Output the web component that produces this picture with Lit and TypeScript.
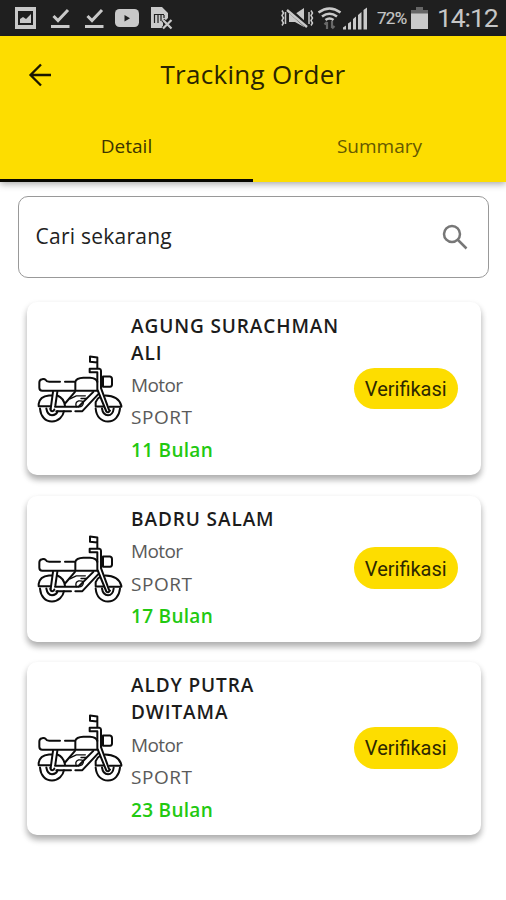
import { LitElement, html, svg, css } from "lit";
import { customElement, property } from "lit/decorators.js";

interface Order {
  name: string[];
  kind: string;
  model: string;
  term: string;
}

const ORDERS: Order[] = [
  { name: ["AGUNG SURACHMAN", "ALI"], kind: "Motor", model: "SPORT", term: "11 Bulan" },
  { name: ["BADRU SALAM"], kind: "Motor", model: "SPORT", term: "17 Bulan" },
  { name: ["ALDY PUTRA", "DWITAMA"], kind: "Motor", model: "SPORT", term: "23 Bulan" },
];

const check = svg`
  <path d="M5.500 8.500 10 13 20 2.500" fill="none" stroke="#c9c9c9" stroke-width="3"/>
  <path d="M3 19h18.500" stroke="#c9c9c9" stroke-width="3"/>`;

@customElement("status-bar")
export class StatusBar extends LitElement {
  static styles = css`
    :host { display: flex; height: 35.500px; background: #1f1f1f; color: #c6c6c6; align-items: center; justify-content: space-between; font-family: Roboto, sans-serif; }
    svg { display: block; flex: none; }
    .left { display: flex; padding-left: 15px; }
    .right { display: flex; align-items: center; padding-right: 8px; }
    .pct { font-size: 17px; letter-spacing: -0.7px; margin-left: 9px; width: 31px; white-space: nowrap; line-height: 24px; padding-top: 1px; -webkit-text-stroke: 0.2px #c6c6c6; }
    .time { font-size: 26.500px; line-height: 32px; margin-left: 9px; letter-spacing: -1.100px; width: 61px; white-space: nowrap; }
    .battery { margin-left: 3px; }
  `;
  render() {
    return html`
      <div class="left">
        <svg width="33" height="24" viewBox="0 0 33 24">
          <path fill-rule="evenodd" fill="#c9c9c9" d="M0 1h21v22H0zM3 5v14h15V5z"/>
          <path fill="#c9c9c9" d="M5 17v-4l3-2 3 2 5-5v9z"/>
        </svg>
        <svg width="34" height="24" viewBox="0 0 34 24"><g transform="translate(0 1.500)">${check}</g></svg>
        <svg width="33" height="24" viewBox="0 0 33 24"><g transform="translate(0 1.500)">${check}</g></svg>
        <svg width="35" height="24" viewBox="0 0 35 24">
          <rect x="0" y="3" width="24" height="18" rx="4.500" fill="#c9c9c9"/>
          <path fill="#1f1f1f" d="M9.500 9v6.500l5.500-3.200z"/>
        </svg>
        <svg width="24" height="24" viewBox="0 0 24 24">
          <path fill="#c9c9c9" d="M1 1h11l6 6v5l-5 5v5H1z"/>
          <path fill="none" stroke="#1f1f1f" stroke-width="1.200" d="M4.500 8v9M4 8.500h10M8 9v8M11 9v6M14 9v3"/>
          <path fill="none" stroke="#1f1f1f" stroke-width="4" d="m13 14 8 8.500M21 14l-8 8.500"/>
          <path fill="none" stroke="#c9c9c9" stroke-width="2.200" d="m13 14 8.500 8.500M21.500 14 13 22.500"/>
        </svg>
      </div>
      <div class="right">
        <svg width="34" height="24" viewBox="0 0 34 24">
          <path fill="none" stroke="#c9c9c9" stroke-width="1.500" d="M1 4.500 2.500 7 1 9.500 2.500 12 1 14.500 2.500 17 1 19.500M4.500 6v12M28 6v12M30 4.500 31.500 7 30 9.500 31.500 12 30 14.500 31.500 17 30 19.500"/>
          <path fill="#c9c9c9" d="M8 8h6l9-6v19l-9-5H8z"/>
          <path stroke="#1f1f1f" stroke-width="5" d="m7 3 20 18"/>
          <path stroke="#c9c9c9" stroke-width="2.400" d="m6 4 20 17"/>
        </svg>
        <svg width="28" height="24" viewBox="0 0 28 24">
          <g fill="none" stroke="#c9c9c9" stroke-width="2.600">
            <path d="M3.500 6.500Q14.500-1.500 25.500 6.500"/><path d="M7 10.500Q14.500 5 22 10.500"/><path d="M10.500 14Q14.500 11 18.500 14"/>
          </g>
          <g fill="none" stroke="#686868" stroke-width="2.200"><path d="M12 23v-7M9.500 18.500 12 16M17 15v7M19.500 20 17 22.500"/></g>
        </svg>
        <svg width="25" height="24" viewBox="0 0 25 24">
          <path fill="#c9c9c9" d="M0 23.500v-2l3-2v4zM5 23.500v-6l3-2v8zM10 23.500V13l3-2.500v13zM15 23.500V9l3.500-3v17.500zM20.500 23.500V4L24 1.500v22z"/>
        </svg>
        <span class="pct">72%</span>
        <svg class="battery" width="17" height="24" viewBox="0 0 17 24">
          <path fill="#666" d="M5 1h7v3h5v4H0V4h5z"/><path fill="#c9c9c9" d="M0 7.500h17V23H0z"/>
        </svg>
        <span class="time">14:12</span>
      </div>`;
  }
}

@customElement("order-card")
export class OrderCard extends LitElement {
  @property({ attribute: false }) order!: Order;

  static styles = css`
    :host { display: flex; box-sizing: border-box; align-items: center; background: #fff; border-radius: 10px; padding: 10.400px 22.500px 11.400px 3.500px; box-shadow: 0 5px 6px rgba(0,0,0,.24), 0 3px 7px rgba(0,0,0,.12); }
    .bike { flex: none; display: block; }
    .info { flex: 1; padding-left: 1px; display: flex; flex-direction: column; gap: 5.400px; font-size: 19px; line-height: 27px; white-space: nowrap; }
    .name { color: #1c1c1c; font-weight: 600; letter-spacing: 0.900px; }
    .row { display: block; }
    .sub { color: #5a5a5a; font-weight: 400; }
    .kind { letter-spacing: -0.600px; }
    .model { letter-spacing: 0.550px; }
    .term { color: #22c911; font-weight: 600; letter-spacing: 0.300px; }
    .verify { flex: none; box-sizing: border-box; width: 104.500px; height: 41.500px; border: 0; border-radius: 21px; padding: 1px 0 0; background: #fddd00; color: #2e2800; font: 400 20px/40px Roboto, sans-serif; text-align: center; }
  `;
  render() {
    const o = this.order;
    return html`
      <svg class="bike" width="100" height="85" viewBox="0 1.500 300 255" fill="none" stroke="#0c0c0c" stroke-width="6" stroke-linecap="round" stroke-linejoin="round">
        <path d="M90 109H58Q49 108 47 103Q43 99 36 101Q28 103 28 111V127Q28 136 37 136H202M105 109H136M136 136V109Q139 98 160 97H180Q198 98 202 109"/>
        <path d="M180 33 202 36V51L180 49ZM202 52V67M179 70H208Q213 71 213 76V128L237 193M179 70V80H202V132L229 198Q235 204 240 195"/>
        <path d="M219 93H240Q246 94 246 101V117Q246 123 240 124H219Z"/>
        <path d="M26 181V175Q29 153 57 150H66M26 182H61M82 150Q101 157 105 181M197 181V170Q202 158 210 154M225 150Q267 151 274 181V184H239M197 183H221"/>
        <path d="M30 189C32 213 46 228 66 228S99 213 102 197M49 189C51 201 57 209 66 209S81 203 83 197M61 190Q62 197 67 197Q72 197 73 192"/>
        <path d="M197 189C199 214 214 228 234 228S268 212 270 189M216 189C218 203 225 209 234 209S250 201 251 189"/>
        <path d="M69 139 62 190M82 139 76 180M75 184H145L190 139M79 197H123M136 197H157L205 146M135 139 105 174"/>
        <path stroke-width="4" d="M120 160 139 151H166M139 184Q134 170 146 166Q160 165 160 172Q159 183 147 184M153 159H169"/>
      </svg>
      <div class="info">
        <div class="name">${o.name.map((n) => html`<span class="row">${n}</span>`)}</div>
        <div class="sub kind">${o.kind}</div>
        <div class="sub model">${o.model}</div>
        <div class="term">${o.term}</div>
      </div>
      <button class="verify">Verifikasi</button>`;
  }
}

@customElement("app-root")
export class AppRoot extends LitElement {
  static styles = css`
    :host { display: block; height: 900px; overflow: hidden; background: #fff; font-family: "Open Sans", "Noto Sans", sans-serif; }
    header { height: 146.500px; background: #fddd00; box-shadow: 0 2px 7px rgba(0,0,0,.35); display: flex; flex-direction: column; }
    .bar { display: grid; grid-template-columns: 80px 1fr 80px; height: 77px; align-items: center; }
    .back { display: block; margin: 1px 0 0 27px; }
    h1 { margin: 0; text-align: center; font-size: 26px; font-weight: 400; line-height: 36px; color: #2a2400; letter-spacing: 0.300px; }
    .tabs { flex: 1; display: grid; grid-template-columns: 1fr 1fr; }
    .tab { text-align: center; font-size: 19px; font-weight: 400; line-height: 26px; padding-top: 20px; color: #3d3500; border-bottom: 3px solid transparent; }
    .tab.active { border-bottom-color: #080700; }
    .tab.idle { color: #655900; }
    .search { box-sizing: border-box; margin: 13.500px 17px 0 18px; height: 82.500px; border: 1.500px solid #999; border-radius: 10px; display: flex; align-items: center; justify-content: space-between; padding: 0 18px 0 16.500px; font-size: 21px; letter-spacing: 0.250px; color: #222; }
    .search span { padding-bottom: 2px; }
    .list { display: flex; flex-direction: column; gap: 20.400px; padding: 24.300px 25.500px 0 26.500px; }
  `;
  render() {
    return html`
      <status-bar></status-bar>
      <header>
        <div class="bar">
          <svg class="back" width="26" height="26" viewBox="0 0 26 26" fill="none" stroke="#1a1600" stroke-width="2.300"><path d="M24 13H3.500M14 2.500 3.500 13 14 23.500"/></svg>
          <h1>Tracking Order</h1>
        </div>
        <div class="tabs">
          <div class="tab active">Detail</div>
          <div class="tab idle">Summary</div>
        </div>
      </header>
      <div class="search">
        <span>Cari sekarang</span>
        <svg width="30" height="30" viewBox="0 0 30 30" fill="none" stroke="#777" stroke-width="2.500"><circle cx="12" cy="12" r="8"/><path d="m18 18 8.500 8.500"/></svg>
      </div>
      <div class="list">${ORDERS.map((o) => html`<order-card .order=${o}></order-card>`)}</div>`;
  }
}
